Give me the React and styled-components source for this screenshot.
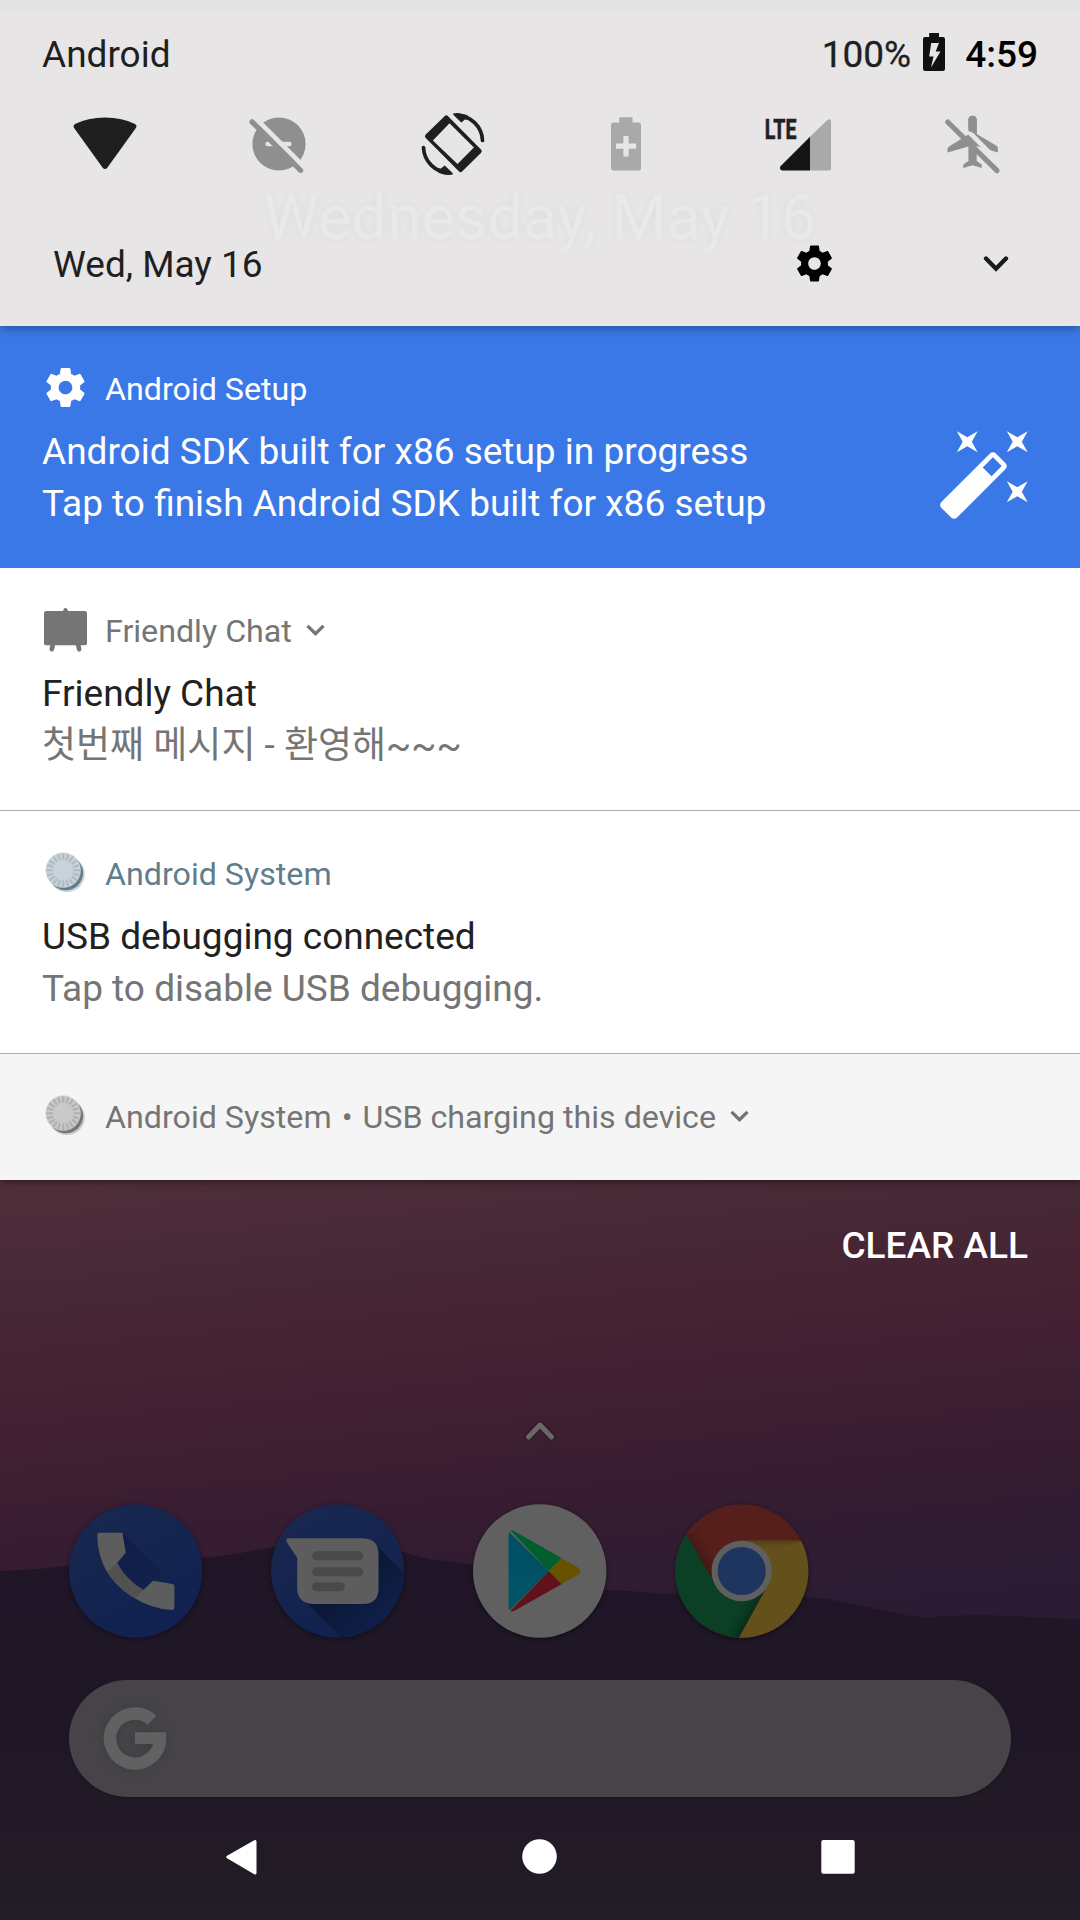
import React from "react";
import styled, { createGlobalStyle } from "styled-components";

const SHADE = "#e7e5e6";

const GlobalStyle = createGlobalStyle`
  * { box-sizing: border-box; }
  body { margin: 0; background: #211a25; }
`;

const Screen = styled.main`
  position: relative;
  width: 1080px;
  height: 1920px;
  overflow: hidden;
  display: flex;
  flex-direction: column;
  font-family: Roboto, "Noto Sans CJK KR", sans-serif;
  font-size: 37px;
  line-height: 52px;
  color: #212121;
  white-space: nowrap;
`;

const Wallpaper = styled.svg`
  position: absolute;
  inset: 0;
  z-index: -1;
`;

const QuickPanel = styled.header`
  position: relative;
  z-index: 1;
  height: 326px;
  flex: none;
  display: flex;
  flex-direction: column;
  background: linear-gradient(#e3e4e2 0 9px, ${SHADE} 10px);
  box-shadow: 0 2px 10px rgba(0, 0, 0, 0.35);
`;

const GhostDate = styled.div`
  position: absolute;
  left: 263px;
  top: 182px;
  font-size: 63px;
  line-height: 72px;
  color: #e9e9ea;
  text-shadow: 0 0 9px rgba(0, 0, 0, 0.045);
`;

const StatusRow = styled.div`
  height: 112px;
  padding: 29px 42px 31px;
  display: flex;
  align-items: center;
`;

const Carrier = styled.span`
  flex: 1;
  color: #1f1f1f;
`;

const BatteryLevel = styled.span`
  color: #1f1f1f;
  -webkit-text-stroke: 0.3px #1f1f1f;
  margin-right: 12px;
`;

const BatteryIcon = styled.svg`
  width: 22px;
  height: 38px;
  margin-bottom: 6px;
`;

const Clock = styled.span`
  font-weight: 500;
  color: #000;
  margin-left: 20px;
`;

const TileRow = styled.div`
  display: flex;
  justify-content: space-between;
  padding: 0 74px 0 73px;
  height: 64px;
`;

const TileIcon = styled.svg`
  width: 64px;
  height: 64px;
  overflow: visible;
`;

const PanelFooter = styled.div`
  position: relative;
  display: flex;
  align-items: center;
  height: 88px;
  margin-top: 43px;
  padding: 0 71px 0 53px;
`;

const PanelDate = styled.span`
  flex: 1;
  color: #1f1f1f;
  padding-top: 3px;
`;

const FooterGear = styled.svg`
  width: 43px;
  height: 43px;
  margin-right: 147px;
`;

const FooterChevron = styled.svg`
  width: 26px;
  height: 18px;
  margin-top: 2px;
`;

const Notifications = styled.section`
  flex: none;
  display: flex;
  flex-direction: column;
  box-shadow: 0 2px 8px rgba(0, 0, 0, 0.45);
`;

const Card = styled.article`
  display: flex;
  justify-content: space-between;
  height: ${(p) => (p.$compact ? 126 : p.$divided ? 243 : 242)}px;
  padding: 38px 44px 0 42px;
  background: ${(p) => p.$bg || "#fff"};
  color: ${(p) => p.$fg || "#212121"};
  border-bottom: ${(p) => (p.$divided ? "1px solid #adadad" : "0")};
`;

const CardHeader = styled.div`
  display: flex;
  align-items: center;
  height: 47px;
  font-size: 32.2px;
  color: ${(p) => p.$tint};
`;

const AppIcon = styled.svg`
  width: 47px;
  height: 47px;
  margin-right: 16px;
`;

const AppName = styled.span`
  padding-top: 2px;
`;

const Bullet = styled.span`
  margin: 0 10px;
`;

const Expand = styled.svg`
  width: 19px;
  height: 12px;
  margin: 1px 0 0 14px;
`;

const Lines = styled.div`
  margin-top: 15px;
`;

const Line = styled.div`
  height: 52px;
  color: ${(p) => (p.$muted ? "#757575" : "inherit")};
`;

const LargeIcon = styled.svg`
  width: 100px;
  height: 100px;
  margin-top: 59px;
`;

const ClearAll = styled.button`
  align-self: flex-end;
  margin: 40px 52px 0 0;
  padding: 0;
  border: 0;
  background: none;
  color: #fff;
  font: 500 37px/52px Roboto, sans-serif;
`;

const Home = styled.section`
  display: flex;
  flex-direction: column;
  align-items: center;
  margin-top: 147px;
`;

const DrawerCaret = styled.svg`
  width: 40px;
  height: 24px;
`;

const Dock = styled.div`
  align-self: stretch;
  display: grid;
  grid-template-columns: repeat(5, 133.4px);
  column-gap: 68.7px;
  padding-left: 69.2px;
  margin-top: 61px;
`;

const DockIcon = styled.svg`
  width: 133.4px;
  height: 134px;
  overflow: visible;
  filter: drop-shadow(0 1px 2px rgba(0, 0, 0, 0.45));
`;

const SearchBar = styled.div`
  width: 942px;
  height: 117px;
  margin-top: 42px;
  padding-left: 33.5px;
  display: flex;
  align-items: center;
  border-radius: 59px;
  background: #464448;
  box-shadow: 0 1px 3px rgba(0, 0, 0, 0.25);
`;

const SearchLogo = styled.svg`
  width: 64px;
  height: 64px;
  margin-bottom: 2px;
  filter: drop-shadow(0 0 5px rgba(0, 0, 0, 0.12));
`;

const NavBar = styled.nav`
  display: flex;
  justify-content: space-between;
  padding: 0 224px 0 224px;
  margin-top: 40px;
`;

const NavIcon = styled.svg`
  width: 36px;
  height: 40px;
`;

const GEAR =
  "M19.43 12.98c.04-.32.07-.64.07-.98s-.03-.66-.07-.98l2.11-1.65c.19-.15.24-.42.12-.64l-2-3.46c-.12-.22-.39-.3-.61-.22l-2.49 1c-.52-.4-1.08-.73-1.69-.98l-.38-2.65C14.46 2.18 14.25 2 14 2h-4c-.25 0-.46.18-.49.42l-.38 2.65c-.61.25-1.17.59-1.69.98l-2.49-1c-.23-.09-.49 0-.61.22l-2 3.46c-.13.22-.07.49.12.64l2.11 1.65c-.04.32-.07.65-.07.98s.03.66.07.98l-2.11 1.65c-.19.15-.24.42-.12.64l2 3.46c.12.22.39.3.61.22l2.49-1c.52.4 1.08.73 1.69.98l.38 2.65c.03.24.24.42.49.42h4c.25 0 .46-.18.49-.42l.38-2.65c.61-.25 1.17-.59 1.69-.98l2.49 1c.23.09.49 0 .61-.22l2-3.46c.12-.22.07-.49-.12-.64l-2.11-1.65zM12 15.5c-1.93 0-3.5-1.57-3.5-3.5s1.57-3.5 3.5-3.5 3.5 1.57 3.5 3.5-1.57 3.5-3.5 3.5z";

const WAND =
  "M7.5 5.6L10 7 8.6 4.5 10 2 7.5 3.4 5 2l1.4 2.5L5 7zm12 9.8L17 14l1.4 2.5L17 19l2.5-1.4L22 19l-1.4-2.5L22 14zM22 2l-2.5 1.4L17 2l1.4 2.5L17 7l2.5-1.4L22 7l-1.4-2.5zm-7.63 5.29c-.39-.39-1.02-.39-1.41 0L1.29 18.96c-.39.39-.39 1.02 0 1.41l2.34 2.34c.39.39 1.02.39 1.41 0L16.7 11.05c.39-.39.39-1.02 0-1.41l-2.33-2.35zm-1.03 5.49l-2.12-2.12 2.44-2.44 2.12 2.12-2.44 2.44z";

const Background = () => (
  <Wallpaper width="1080" height="1920" viewBox="0 0 1080 1920">
    <defs>
      <linearGradient id="sky" gradientUnits="userSpaceOnUse" x1="540" y1="1130" x2="589" y2="1630">
        <stop offset="0" stopColor="#502f3b" />
        <stop offset="0.2" stopColor="#482936" />
        <stop offset="0.5" stopColor="#422032" />
        <stop offset="0.75" stopColor="#361c31" />
        <stop offset="1" stopColor="#2b1c34" />
      </linearGradient>
      <linearGradient id="hills" x1="0" y1="0" x2="0" y2="1">
        <stop offset="0" stopColor="#1f1526" />
        <stop offset="0.5" stopColor="#201726" />
        <stop offset="1" stopColor="#231d27" />
      </linearGradient>
    </defs>
    <rect width="1080" height="1920" fill="url(#sky)" />
    <path
      d="M0 1571C20 1570 45 1569 62 1566C110 1561 160 1562 203 1558C230 1555 250 1551 275 1547C320 1538 370 1544 403 1552C420 1557 430 1560 445 1561C500 1566 550 1585 607 1590C640 1591 655 1594 678 1594C730 1590 780 1592 809 1597C840 1600 860 1606 891 1612C910 1617 928 1618 943 1616C975 1614 1010 1616 1039 1617Q1060 1619 1080 1619V1920H0Z"
      fill="url(#hills)"
    />
  </Wallpaper>
);

const WifiTile = () => (
  <TileIcon viewBox="0 0 64 64">
    <path d="M2 12Q14.500 5.400 32 5.400T62 12Q64.600 13.700 62.700 16.300L34.300 55.700Q32 58.300 29.700 55.700L1.300 16.300Q-.6 13.700 2 12Z" fill="#1f1f1f" />
  </TileIcon>
);

const DndOffTile = () => (
  <TileIcon viewBox="0 0 64 64">
    <circle cx="32" cy="32" r="26.600" fill="#8f8f8f" />
    <path d="M20.700 32H42.300" stroke={SHADE} strokeWidth="4.600" strokeLinecap="round" />
    <path d="M10 7.700L60 57.700" stroke={SHADE} strokeWidth="4.800" />
    <path d="M5 9.800L53.600 58.300" stroke="#8f8f8f" strokeWidth="5.200" strokeLinecap="round" />
  </TileIcon>
);

const RotateTile = () => (
  <TileIcon viewBox="0 0 64 64" fill="#1f1f1f">
    <path d="M25.300 6L6.500 24.300L39.600 57.500L58.200 39.300Z" stroke="#1f1f1f" strokeWidth="5" strokeLinejoin="round" />
    <path d="M28.500 11.300L11.900 28.400L36.500 52L52.900 35.500Z" fill={SHADE} />
    <path d="M36 2.800C50 4 61 14.500 61.500 28.500M28 61.200C14 60 3 49.500 2.500 35.500" fill="none" stroke="#1f1f1f" strokeWidth="3.700" strokeLinecap="round" />
    <path d="M32.500 1.200Q31.500 2 33 3.500L40.300 10.600L44 7.500L50 8L46 3Q39 .8 32.500 1.200ZM31.500 62.800Q32.500 62 31 60.500L23.700 53.400L20 56.500L14 56L18 61Q25 63.200 31.500 62.800Z" />
  </TileIcon>
);

const BatterySaverTile = () => (
  <TileIcon viewBox="0 0 64 64">
    <path d="M25.300 5.300H38.500V10.500H44.500Q47 10.500 47 13V56Q47 58.500 44.500 58.500H19.500Q17 58.500 17 56V13Q17 10.500 19.500 10.500H25.300Z" fill="#aaa9a9" />
    <path d="M32 24V44.500M21.900 34.200H42.100" stroke={SHADE} strokeWidth="5.200" />
  </TileIcon>
);

const SignalTile = () => (
  <TileIcon viewBox="0 0 64 64">
    <text x="-3.200" y="27.400" textLength="31.600" lengthAdjust="spacingAndGlyphs" fontFamily="Roboto, sans-serif" fontWeight="700" fontSize="28.500" fill="#212121" stroke="#212121" strokeWidth="0.600">
      LTE
    </text>
    <path d="M42 24.800L59.700 7.800Q63 6 63 9.500V56.500Q63 58.500 61 58.500H42Z" fill="#aaa9a9" />
    <path d="M42 24.800V58.500H14Q11 57.500 12.500 54.300Z" fill="#151515" />
  </TileIcon>
);

const AirplaneOffTile = () => (
  <TileIcon viewBox="0 0 64 64">
    <path
      d="M26.400 7.500Q26.700 3.700 30.500 3.700T34.700 7.500V21.900L54.500 33.700Q56 35 55.900 36.500V40.400L34.700 34V49L39.700 52.500V56L30.500 53.300L21.300 56V52.500L26.400 49V34.400L5.500 40.400V37Q5.600 35.500 7 34.500L26.400 22.500Z"
      fill="#8f8f8f"
    />
    <path d="M22 14.900L50.500 43.900" stroke={SHADE} strokeWidth="4.800" />
    <path d="M26.400 7.500Q26.700 3.700 30.500 3.700T34.700 7.500V21.900L26.400 19Z" fill="#8f8f8f" />
    <path d="M5.700 10L55 58.600" stroke="#8f8f8f" strokeWidth="5.200" strokeLinecap="round" />
  </TileIcon>
);

const BatteryGlyph = () => (
  <BatteryIcon viewBox="0 0 22 38">
    <path
      fillRule="evenodd"
      d="M6.200 0H16V4H20Q22 4 22 6V36Q22 38 20 38H2Q0 38 0 36V6Q0 4 2 4H6.200ZM8.200 10L6.200 23.500H10.500L8 34.500L17.500 18.500H12.700L16 10Z"
      fill="#101010"
    />
  </BatteryIcon>
);

const Chevron = ({ color }) => (
  <Expand viewBox="0 0 19 12">
    <path d="M1.500 1.800L9.500 9.700L17.500 1.800" fill="none" stroke={color} strokeWidth="3.300" />
  </Expand>
);

const ticks = Array.from({ length: 20 }, (_, i) => i * 18);

const SystemIcon = ({ light, dark, tick }) => (
  <AppIcon viewBox="0 0 47 47">
    <circle cx="25" cy="25.300" r="17.800" fill={light} />
    <circle cx="23.800" cy="24" r="17.300" fill={dark} />
    <circle cx="21.200" cy="21.200" r="17.600" fill={light} />
    {ticks.map((a) => (
      <path key={a} d="M21.200 5.200V10" stroke={tick} strokeWidth="2.100" strokeLinecap="round" transform={`rotate(${a} 21.200 21.200)`} />
    ))}
  </AppIcon>
);

const BoardIcon = () => (
  <AppIcon viewBox="0 0 47 47" fill="#757575">
    <path d="M21 6Q21.300 2 23.500 2T26 6Z" />
    <rect x="2" y="5" width="43" height="34.300" rx="2" />
    <path d="M11 38L9.800 43.300M36 38L37.200 43.300" stroke="#757575" strokeWidth="4.600" strokeLinecap="round" />
  </AppIcon>
);

const PhoneApp = () => (
  <DockIcon viewBox="0 0 133.4 134">
    <defs>
      <linearGradient id="dial" x1="0.2" y1="0" x2="0.7" y2="1">
        <stop offset="0" stopColor="#19284f" />
        <stop offset="1" stopColor="#102150" />
      </linearGradient>
      <linearGradient id="dialShade" x1="0.2" y1="0.2" x2="0.8" y2="0.8">
        <stop offset="0" stopColor="#0f1d46" stopOpacity="0.8" />
        <stop offset="1" stopColor="#0f1d46" stopOpacity="0" />
      </linearGradient>
    </defs>
    <circle cx="66.700" cy="67" r="66.700" fill="url(#dial)" />
    <path d="M54 29L95 70L84 77L105 80L118 96L92 122L40 68Z" fill="url(#dialShade)" />
    <path
      d="M30 28.700H52Q53.500 28.700 53.600 30L56.800 48.700L48.200 59Q57 76 74.400 86L84 76.700L103.500 80Q105.400 80.500 105.400 82V103.500Q105.400 106 103 106Q82 105 62 92Q28.500 70 28.300 31Q28.300 28.700 30 28.700Z"
      fill="#5d5d5d"
    />
    <path d="M48.200 59Q57 76 74.400 86L66.500 94.500Q48 83 38.500 67.700Z" fill="#515151" />
  </DockIcon>
);

const MessagesApp = () => (
  <DockIcon viewBox="0 0 133.4 134">
    <defs>
      <clipPath id="msgClip">
        <circle cx="66.700" cy="67" r="66.700" />
      </clipPath>
      <linearGradient id="msgShade" gradientUnits="userSpaceOnUse" x1="80" y1="80" x2="114" y2="116">
        <stop offset="0" stopColor="#0b1838" />
        <stop offset="1" stopColor="#0f1f4a" />
      </linearGradient>
    </defs>
    <circle cx="66.700" cy="67" r="66.700" fill="url(#dial)" />
    <path d="M103 39L160 96V200H134L32 95Z" fill="url(#msgShade)" clipPath="url(#msgClip)" />
    <path d="M17 34.300H92Q107.500 35 107.500 50V84Q107.500 100 92 100H42Q26.200 99 26.200 84V53.700L15.500 37.700Q14.500 34.500 17 34.300Z" fill="#5d5d5d" />
    <path d="M45.500 51.700H88M45.500 67.800H88M45.500 82.700H69.500" stroke="#494949" strokeWidth="9" strokeLinecap="round" />
  </DockIcon>
);

const PlayApp = () => (
  <DockIcon viewBox="0 0 133.4 134">
    <defs>
      <clipPath id="playClip">
        <path d="M35.600 30Q36.500 25 41.500 27.300L105.500 63.700Q109.500 67 105.500 70.500L41.500 106.800Q36.500 109 35.600 104Z" />
      </clipPath>
      <linearGradient id="playBlue" x1="0" y1="0" x2="0" y2="1">
        <stop offset="0" stopColor="#004d66" />
        <stop offset="1" stopColor="#005663" />
      </linearGradient>
    </defs>
    <circle cx="66.700" cy="67" r="66.700" fill="#606060" />
    <g clipPath="url(#playClip)">
      <path d="M35 27V108L76 67Z" fill="url(#playBlue)" />
      <path d="M35 24L75.900 67L89.500 53.500L60 20Z" fill="#005f2d" />
      <path d="M35 109.500L75.900 67L89.500 80.500L60 115Z" fill="#60111b" />
      <path d="M75.900 67L89.500 53L120 67L89.500 81Z" fill="#665300" />
    </g>
  </DockIcon>
);

const ChromeApp = () => (
  <DockIcon viewBox="0 0 133.4 134">
    <defs>
      <clipPath id="chromeClip">
        <circle cx="66.700" cy="67" r="66.700" />
      </clipPath>
      <linearGradient id="redShade" gradientUnits="userSpaceOnUse" x1="24" y1="52" x2="40" y2="42">
        <stop offset="0" stopColor="#441814" />
        <stop offset="1" stopColor="#561f1b" stopOpacity="0" />
      </linearGradient>
      <linearGradient id="greenShade" gradientUnits="userSpaceOnUse" x1="78" y1="110" x2="62" y2="101">
        <stop offset="0" stopColor="#072b19" />
        <stop offset="1" stopColor="#0b3f26" stopOpacity="0" />
      </linearGradient>
      <linearGradient id="yellowShade" x1="0" y1="0" x2="0" y2="1">
        <stop offset="0" stopColor="#544216" />
        <stop offset="1" stopColor="#64501b" stopOpacity="0" />
      </linearGradient>
    </defs>
    <g clipPath="url(#chromeClip)">
      <rect width="134" height="134" fill="#561f1b" />
      <path d="M11.700 31L45 88L66 67L60 -5Z" fill="url(#redShade)" />
      <path d="M-2 8L11.700 31L41 82L92 84L63.700 134H-2Z" fill="#0b3f26" />
      <path d="M92 84L63.700 134H45L60 90Z" fill="url(#greenShade)" />
      <path d="M66.700 36.700H134V134H63.700L92.500 82Z" fill="#64501b" />
      <path d="M66.700 36.700H128L92 48Z" fill="url(#yellowShade)" />
    </g>
    <circle cx="66.700" cy="67" r="30.200" fill="#5f5f5f" />
    <circle cx="66.700" cy="67" r="24.100" fill="#1d355f" />
  </DockIcon>
);

export default function App() {
  return (
    <Screen>
      <GlobalStyle />
      <Background />

      <QuickPanel>
        <GhostDate>Wednesday, May 16</GhostDate>
        <StatusRow>
          <Carrier>Android</Carrier>
          <BatteryLevel>100%</BatteryLevel>
          <BatteryGlyph />
          <Clock>4:59</Clock>
        </StatusRow>
        <TileRow>
          <WifiTile />
          <DndOffTile />
          <RotateTile />
          <BatterySaverTile />
          <SignalTile />
          <AirplaneOffTile />
        </TileRow>
        <PanelFooter>
          <PanelDate>Wed, May 16</PanelDate>
          <FooterGear viewBox="0 0 24 24">
            <path d={GEAR} />
          </FooterGear>
          <FooterChevron viewBox="0 0 26 18">
            <path d="M3 3.500L13 13.700L23 3.500" fill="none" stroke="#1a1a1a" strokeWidth="4.300" strokeLinecap="round" />
          </FooterChevron>
        </PanelFooter>
      </QuickPanel>

      <Notifications>
        <Card $bg="#3b78e7" $fg="#fff">
          <div>
            <CardHeader $tint="#fff">
              <AppIcon viewBox="0 0 24 24" fill="#fff">
                <path d={GEAR} />
              </AppIcon>
              <AppName>Android Setup</AppName>
            </CardHeader>
            <Lines>
              <Line>Android SDK built for x86 setup in progress</Line>
              <Line>Tap to finish Android SDK built for x86 setup</Line>
            </Lines>
          </div>
          <LargeIcon viewBox="0 0 24 24" fill="#fff">
            <path d={WAND} />
          </LargeIcon>
        </Card>

        <Card $divided>
          <div>
            <CardHeader $tint="#757575">
              <BoardIcon />
              <AppName>Friendly Chat</AppName>
              <Chevron color="#757575" />
            </CardHeader>
            <Lines>
              <Line>Friendly Chat</Line>
              <Line $muted lang="ko">첫번째 메시지 - 환영해~~~</Line>
            </Lines>
          </div>
        </Card>

        <Card $divided>
          <div>
            <CardHeader $tint="#607d8b">
              <SystemIcon light="#c9d2d8" dark="#607d8b" tick="#adbbc2" />
              <AppName>Android System</AppName>
            </CardHeader>
            <Lines>
              <Line>USB debugging connected</Line>
              <Line $muted>Tap to disable USB debugging.</Line>
            </Lines>
          </div>
        </Card>

        <Card $compact $bg="#f5f5f5">
          <CardHeader $tint="#757575">
            <SystemIcon light="#c9c9c9" dark="#757575" tick="#b0b0b0" />
            <AppName>
              Android System<Bullet>•</Bullet>USB charging this device
            </AppName>
            <Chevron color="#757575" />
          </CardHeader>
        </Card>
      </Notifications>

      <ClearAll>CLEAR ALL</ClearAll>

      <Home>
        <DrawerCaret viewBox="0 0 40 24">
          <g fill="none" strokeLinecap="round" strokeLinejoin="round">
            <path d="M8.500 18L20 6L31.500 18" stroke="#2c1524" strokeOpacity="0.6" strokeWidth="8" />
            <path d="M8.500 18L20 6L31.500 18" stroke="#6c6669" strokeWidth="5" />
          </g>
        </DrawerCaret>
        <Dock>
          <PhoneApp />
          <MessagesApp />
          <PlayApp />
          <ChromeApp />
        </Dock>
        <SearchBar>
          <SearchLogo viewBox="0 0 64 64" fill="none">
            <path d="M49 14.200A25 25 0 1 0 57 32" stroke="#616161" strokeWidth="12.400" />
            <path d="M32 26.200H63V32.500L50 38H32Z" fill="#616161" />
          </SearchLogo>
        </SearchBar>
      </Home>

      <NavBar>
        <NavIcon viewBox="0 0 36 40">
          <path d="M3.800 20L31 4.500V36Z" fill="#fff" stroke="#fff" strokeWidth="3" strokeLinejoin="round" />
        </NavIcon>
        <NavIcon viewBox="0 0 36 40">
          <circle cx="17.500" cy="19.500" r="17.300" fill="#fff" />
        </NavIcon>
        <NavIcon viewBox="0 0 36 40">
          <rect x="1.300" y="3" width="33.400" height="33.800" rx="2" fill="#fff" />
        </NavIcon>
      </NavBar>
    </Screen>
  );
}
